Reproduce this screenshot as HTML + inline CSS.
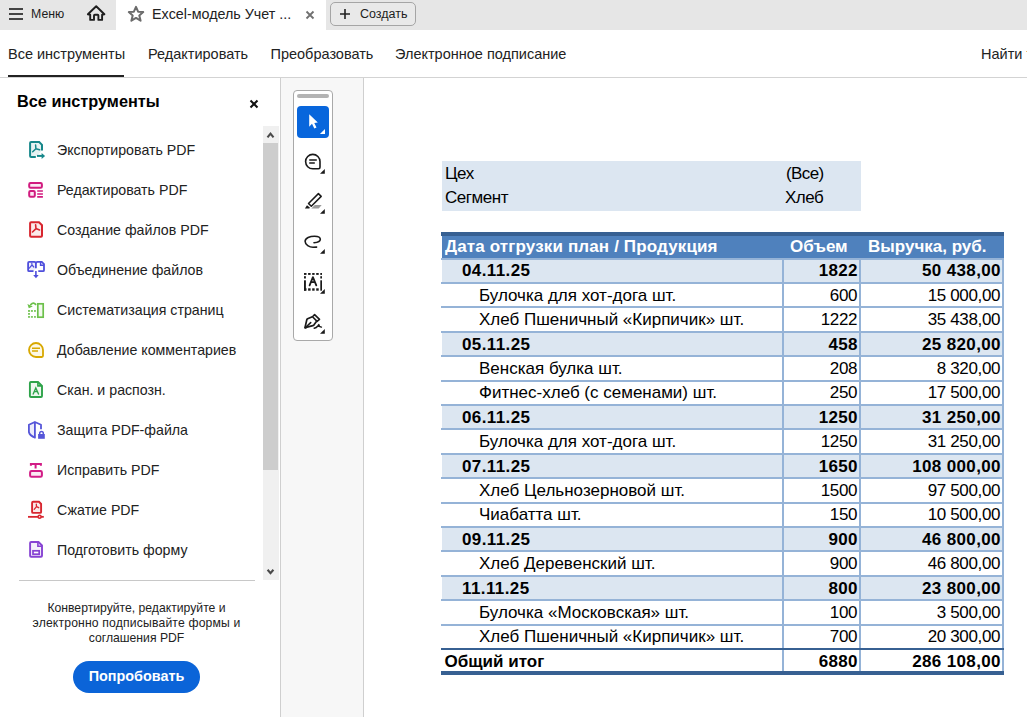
<!DOCTYPE html>
<html><head><meta charset="utf-8">
<style>
*{margin:0;padding:0;box-sizing:border-box}
html,body{width:1027px;height:717px;overflow:hidden;background:#fff;font-family:"Liberation Sans",sans-serif;color:#222}
.a{position:absolute;white-space:nowrap}
#top{position:absolute;left:0;top:0;width:1027px;height:30px;background:#e6e6e6}
#tab{position:absolute;left:116px;top:0;width:210px;height:30px;background:#fff}
.nav{font-size:14.5px;line-height:14.5px;color:#222}
.it{font-size:14.2px;line-height:14px;color:#222}
.t{font-size:17px;line-height:17px;color:#000}
.b{font-weight:bold}
.r{text-align:right}
</style></head><body>
<!-- top bar -->
<div id="top"></div>
<div id="tab"></div>
<!-- hamburger -->
<div class="a" style="left:9px;top:8px;width:14px;height:2px;background:#444"></div>
<div class="a" style="left:9px;top:13px;width:14px;height:2px;background:#444"></div>
<div class="a" style="left:9px;top:18px;width:14px;height:2px;background:#444"></div>
<div class="a" style="left:31px;top:8px;font-size:12.3px;line-height:12px;color:#1d1d1d">Меню</div>
<!-- home -->
<svg class="a" style="left:82px;top:0px" width="28" height="28" viewBox="0 0 28 28">
<path d="M14.2 6.2 L5.9 14.3 L8.2 14.8 L8.2 19.9 L12 19.9 L12 15.6 Q12 14.8 12.8 14.8 L15.6 14.8 Q16.4 14.8 16.4 15.6 L16.4 19.9 L20.1 19.9 L20.1 14.8 L22.4 14.3 Z" fill="none" stroke="#1e1e1e" stroke-width="1.9" stroke-linejoin="round"/>
</svg>
<!-- star -->
<svg class="a" style="left:127px;top:5px" width="18" height="18" viewBox="0 0 18 18">
<path d="M9 1.9 L11.1 6.7 L16.2 7.1 L12.3 10.4 L13.6 15.7 L9 12.9 L4.4 15.7 L5.7 10.4 L1.8 7.1 L6.9 6.7 Z" fill="none" stroke="#6b6b6b" stroke-width="2" stroke-linejoin="round"/>
</svg>
<div class="a" style="left:152px;top:7px;font-size:14.3px;line-height:14px;color:#222">Excel-модель Учет ...</div>
<!-- tab close -->
<svg class="a" style="left:305px;top:10px" width="10" height="10" viewBox="0 0 10 10">
<path d="M1.5 1.5 L8.5 8.5 M8.5 1.5 L1.5 8.5" stroke="#707070" stroke-width="1.8"/>
</svg>
<!-- create button -->
<div class="a" style="left:330px;top:2px;width:86px;height:24px;border:1px solid #a5a5a5;border-radius:5px;background:#e9e9e9"></div>
<svg class="a" style="left:339px;top:8px" width="12" height="12" viewBox="0 0 12 12">
<path d="M6 1 V11 M1 6 H11" stroke="#222" stroke-width="1.6"/>
</svg>
<div class="a" style="left:360px;top:8px;font-size:12.5px;line-height:12px;color:#1d1d1d">Создать</div>

<!-- nav row -->
<div class="a nav" style="left:8px;top:47px">Все инструменты</div>
<div class="a nav" style="left:148px;top:47px">Редактировать</div>
<div class="a nav" style="left:270.5px;top:47px">Преобразовать</div>
<div class="a nav" style="left:395px;top:47px">Электронное подписание</div>
<div class="a nav" style="left:981px;top:47px">Найти т</div>
<div class="a" style="left:8px;top:75px;width:116px;height:2px;background:#222"></div>
<div class="a" style="left:0;top:77px;width:1027px;height:1px;background:#d3d3d3"></div>

<!-- left panel -->
<div class="a" style="left:17px;top:93px;font-size:16.3px;line-height:16px;font-weight:bold;color:#000">Все инструменты</div>
<svg class="a" style="left:248px;top:98px" width="12" height="12" viewBox="0 0 12 12">
<path d="M2.5 2.5 L9.5 9.5 M9.5 2.5 L2.5 9.5" stroke="#111" stroke-width="2"/>
</svg>
<div class="a" style="left:280px;top:78px;width:1px;height:639px;background:#cfcfcf"></div>
<div class="a" style="left:281px;top:78px;width:82px;height:639px;background:#f7f7f7"></div>
<div class="a" style="left:363px;top:78px;width:1px;height:639px;background:#cfcfcf"></div>
<!-- scrollbar -->
<div class="a" style="left:263px;top:126px;width:16px;height:454px;background:#f0f0f0"></div>
<div class="a" style="left:263px;top:143px;width:15px;height:327px;background:#cdcdcd"></div>
<svg class="a" style="left:265px;top:130px" width="12" height="10" viewBox="0 0 12 10"><path d="M2.5 7.3 L5.5 3.6 L8.5 7.3" fill="none" stroke="#4a4a4a" stroke-width="2.1"/></svg>
<svg class="a" style="left:265px;top:566px" width="12" height="10" viewBox="0 0 12 10"><path d="M2.6 3.8 L5.5 7.2 L8.4 3.8" fill="none" stroke="#4a4a4a" stroke-width="2.1"/></svg>

<!-- items -->
<div class="a it" style="left:57px;top:143px">Экспортировать PDF</div>
<div class="a it" style="left:57px;top:183px">Редактировать PDF</div>
<div class="a it" style="left:57px;top:223px">Создание файлов PDF</div>
<div class="a it" style="left:57px;top:263px">Объединение файлов</div>
<div class="a it" style="left:57px;top:303px">Систематизация страниц</div>
<div class="a it" style="left:57px;top:343px">Добавление комментариев</div>
<div class="a it" style="left:57px;top:383px">Скан. и распозн.</div>
<div class="a it" style="left:57px;top:423px">Защита PDF-файла</div>
<div class="a it" style="left:57px;top:463px">Исправить PDF</div>
<div class="a it" style="left:57px;top:503px">Сжатие PDF</div>
<div class="a it" style="left:57px;top:543px">Подготовить форму</div>

<div class="a" style="left:19px;top:580px;width:236px;height:1px;background:#c8c8c8"></div>
<div class="a" style="left:0;top:601px;width:273px;text-align:center;font-size:12.2px;line-height:15px;color:#222;white-space:normal">Конвертируйте, редактируйте и<br><span style="letter-spacing:0.16px">электронно подписывайте формы и</span><br>соглашения PDF</div>
<div class="a" style="left:73px;top:661px;width:127px;height:32px;border-radius:16px;background:#0b64d8"></div>
<div class="a" style="left:73px;top:669px;width:127px;text-align:center;font-size:14.4px;line-height:14px;font-weight:bold;color:#fff">Попробовать</div>

<!-- ICONS_PANEL -->
<!-- export -->
<svg class="a" style="left:24px;top:136px" width="26" height="26" viewBox="0 0 26 26">
<path d="M11.8 20.9 L7.1 20.9 Q6.1 20.9 6.1 19.9 L6.1 7.1 Q6.1 6.1 7.1 6.1 L15.2 6.1 L18 8.9 L18 14.5" fill="#e6f2f2" stroke="#16878a" stroke-width="2"/>
<path d="M11.6 9 L11.9 12.7 L8.7 15.8 M11.9 12.7 L15.6 13.8" fill="none" stroke="#16878a" stroke-width="1.5" stroke-linecap="round"/>
<path d="M13 19.9 L18.5 19.9" stroke="#16878a" stroke-width="2"/>
<path d="M17.6 16.9 L21.1 19.9 L17.6 22.9 Z" fill="#16878a"/>
</svg>
<!-- edit -->
<svg class="a" style="left:24px;top:177px" width="26" height="26" viewBox="0 0 26 26">
<rect x="5.2" y="6.1" width="12.7" height="4.7" rx="1.3" fill="#fbe9f3" stroke="#d11b7f" stroke-width="2"/>
<rect x="5.2" y="14" width="5.6" height="5.8" rx="1.3" fill="#fbe9f3" stroke="#d11b7f" stroke-width="2"/>
<path d="M13.2 14 H18.9 M13.2 16.95 H18.9 M13.2 19.85 H18.9" stroke="#d11b7f" stroke-width="1.6"/>
</svg>
<!-- create -->
<svg class="a" style="left:24px;top:217px" width="26" height="26" viewBox="0 0 26 26">
<path d="M7.1 5.2 L15 5.2 L18 8.2 L18 18.8 Q18 19.8 17 19.8 L7.1 19.8 Q6.1 19.8 6.1 18.8 L6.1 6.2 Q6.1 5.2 7.1 5.2 Z" fill="#fbeaea" stroke="#d8262f" stroke-width="2"/>
<path d="M11.6 7.9 L12 11.6 L8.5 15 M12 11.6 L15.5 13" fill="none" stroke="#d8262f" stroke-width="1.6" stroke-linecap="round"/>
</svg>
<!-- combine -->
<svg class="a" style="left:24px;top:256px" width="26" height="26" viewBox="0 0 26 26">
<path d="M9.5 15.2 L5.1 15.2 Q4.1 15.2 4.1 14.2 L4.1 6.9 Q4.1 5.9 5.1 5.9 L10.3 5.9 Q11.9 5.9 11.9 7.5 L11.9 12.3" fill="#eeeefb" stroke="#4f4fdc" stroke-width="1.8"/>
<path d="M11.9 7.5 Q11.9 5.9 13.6 5.9 L17.8 5.9 L20 8.1 L20 14.2 Q20 15.2 19 15.2 L14.3 15.2" fill="none" stroke="#4f4fdc" stroke-width="1.8"/>
<path d="M16.6 5.9 L16.6 9.2 L20 9.2" fill="none" stroke="#4f4fdc" stroke-width="1.5"/>
<path d="M7.8 7.2 L8 9 L5.3 12.2 M8 9 L9.8 11" fill="none" stroke="#4f4fdc" stroke-width="1.2" stroke-linecap="round"/>
<path d="M11.9 15 L11.9 19.5" stroke="#4f4fdc" stroke-width="1.6"/>
<path d="M9.2 19 L14.7 19 L11.95 22.2 Z" fill="#4f4fdc"/>
</svg>
<!-- organize -->
<svg class="a" style="left:24px;top:297px" width="26" height="26" viewBox="0 0 26 26">
<rect x="13.8" y="6.8" width="5.4" height="13.4" fill="#f2f9ee" stroke="#6cc04a" stroke-width="1.7"/>
<g fill="#6cc04a" opacity="0.85">
<rect x="4" y="13" width="2" height="1.9"/><rect x="6.9" y="13" width="2" height="1.9"/><rect x="10" y="13" width="1.9" height="1.9"/>
<rect x="4" y="16" width="2" height="1.8"/>
<rect x="4" y="19" width="2" height="1.8"/><rect x="6.9" y="19" width="2" height="1.8"/><rect x="10" y="19" width="1.9" height="1.8"/>
</g>
<path d="M11.6 7.4 Q9.5 4.8 6.8 7.6" fill="none" stroke="#6cc04a" stroke-width="1.8" stroke-linecap="round"/>
<path d="M3.4 7 L8.8 9.4 L4.8 11.2 Z" fill="#6cc04a"/>
</svg>
<!-- comment -->
<svg class="a" style="left:24px;top:337px" width="26" height="26" viewBox="0 0 26 26">
<path d="M12 20 A7 7 0 1 1 19 13 L19 18.8 Q19 20 17.8 20 Z" fill="#fdf8e4" stroke="#d8a800" stroke-width="1.8"/>
<path d="M8 11.2 H16 M8 14.1 H14" stroke="#d8a800" stroke-width="1.5"/>
</svg>
<!-- scan -->
<svg class="a" style="left:24px;top:377px" width="26" height="26" viewBox="0 0 26 26">
<path d="M6.9 5 L14 5 L18 9 L18 19 Q18 20 17 20 L6.9 20 Q5.9 20 5.9 19 L5.9 6 Q5.9 5 6.9 5 Z" fill="#edf7ef" stroke="#2ea34a" stroke-width="1.9"/>
<path d="M13.9 5.2 L13.9 8.9 L17.8 8.9" fill="none" stroke="#2ea34a" stroke-width="1.6"/>
<path d="M9.2 17 L11.8 10.9 L14.5 17 M10.2 14.6 H13.5" fill="none" stroke="#2ea34a" stroke-width="1.4" stroke-linecap="round"/>
</svg>
<!-- protect -->
<svg class="a" style="left:24px;top:417px" width="26" height="26" viewBox="0 0 26 26">
<path d="M10.9 5 L4.9 7.8 L4.9 15 Q5.5 18.5 10.9 21 Z" fill="#ededfb"/>
<path d="M17 12.3 L17 7.8 L10.9 5 L4.9 7.8 L4.9 15 Q5.5 18.5 11.6 21 M10.9 5 L10.9 21" fill="none" stroke="#5656d9" stroke-width="1.8" stroke-linejoin="round"/>
<path d="M15.7 17.3 L15.7 16.3 A1.8 1.8 0 0 1 19.3 16.3 L19.3 17.3" fill="none" stroke="#5656d9" stroke-width="1.5"/>
<rect x="14.1" y="17" width="6.7" height="4.8" fill="#5656d9"/>
</svg>
<!-- redact -->
<svg class="a" style="left:24px;top:457px" width="26" height="26" viewBox="0 0 26 26">
<path d="M6.9 8.7 L6.9 7.1 L16.9 7.1 L16.9 8.7 M11.6 7.1 L11.6 11.6" fill="none" stroke="#d21c86" stroke-width="2"/>
<rect x="6.1" y="14" width="11.8" height="5.8" rx="1.4" fill="#fbe9f3" stroke="#d21c86" stroke-width="2"/>
</svg>
<!-- compress -->
<svg class="a" style="left:24px;top:497px" width="26" height="26" viewBox="0 0 26 26">
<path d="M9.1 4.8 L15 4.8 L17.1 7 L17.1 14.9 Q17.1 15.9 16.1 15.9 L9.1 15.9 Q8.1 15.9 8.1 14.9 L8.1 5.8 Q8.1 4.8 9.1 4.8 Z" fill="#fbeaea" stroke="#d8262f" stroke-width="1.9"/>
<path d="M12.3 7.1 L12.5 9.6 L10.2 12.3 M12.5 9.6 L14.7 10.7" fill="none" stroke="#d8262f" stroke-width="1.3" stroke-linecap="round"/>
<path d="M4 19.85 H19.8" stroke="#d8262f" stroke-width="1.8"/>
<circle cx="15.6" cy="19.85" r="1.5" fill="#fbeaea" stroke="#d8262f" stroke-width="1.5"/>
</svg>
<!-- form -->
<svg class="a" style="left:24px;top:537px" width="26" height="26" viewBox="0 0 26 26">
<path d="M7.1 5 L14.5 5 L18 8.5 L18 18.8 Q18 19.8 17 19.8 L7.1 19.8 Q6.1 19.8 6.1 18.8 L6.1 6 Q6.1 5 7.1 5 Z" fill="#f4effb" stroke="#8743d3" stroke-width="1.9"/>
<path d="M13.9 5.2 L13.9 9.3 L17.8 9.3" fill="none" stroke="#8743d3" stroke-width="1.6"/>
<rect x="9" y="13.8" width="6.2" height="3.4" fill="#fff" stroke="#8743d3" stroke-width="1.7"/>
</svg>
<!-- /ICONS_PANEL -->
<!-- TOOLBAR -->
<div class="a" style="left:293px;top:90px;width:40px;height:251px;border:1px solid #a9a9a9;border-radius:4px;background:#fff"></div>
<div class="a" style="left:297px;top:94px;width:32px;height:4px;border-radius:2px;background:#b3b3b3"></div>
<div class="a" style="left:297px;top:106px;width:32px;height:32px;border-radius:4px;background:#0866dc"></div>
<svg class="a" style="left:300px;top:108px" width="28" height="28" viewBox="0 0 28 28">
<path d="M9.2 6.3 L17.8 14.5 L14.3 15 L16.5 19.6 L14.3 20.6 L12 15.8 L9.2 18.7 Z" fill="#fff"/>
<path d="M19.9 26 L25 26 L25 20.9 Z" fill="#fff"/>
</svg>
<svg class="a" style="left:300px;top:150px" width="28" height="28" viewBox="0 0 28 28">
<path d="M12.8 18.8 A7.2 7.2 0 1 1 20 11.6 L20 17.3 Q20 18.8 18.5 18.8 Z" fill="none" stroke="#1a1a1a" stroke-width="1.6"/>
<path d="M9.2 9.95 H16.8 M9.2 13.1 H14.8" stroke="#1a1a1a" stroke-width="1.5"/>
<path d="M20 23.8 L24.8 23.8 L24.8 19 Z" fill="#1a1a1a"/>
</svg>
<svg class="a" style="left:300px;top:188px" width="28" height="28" viewBox="0 0 28 28">
<path d="M18.4 5.6 L21.2 8.4 L11.3 18.3 L8.5 15.5 Z" fill="none" stroke="#1a1a1a" stroke-width="1.5" stroke-linejoin="round"/>
<path d="M4.9 20.6 L7 17.2 L9.8 19.6 L9.4 20.6 Z" fill="#1a1a1a"/>
<path d="M11.3 20.5 L18.7 20.5 L21.7 17 L14.8 17 Z" fill="#9a9a9a"/>
<path d="M20 25.8 L24.8 25.8 L24.8 21 Z" fill="#1a1a1a"/>
</svg>
<svg class="a" style="left:300px;top:228px" width="28" height="28" viewBox="0 0 28 28">
<path d="M14 14.8 C17 14.6 20.3 13.8 20.3 11.3 C20.3 8.8 17 8.2 14.5 8.2 C10 8.2 5.1 10 5.1 13.3 C5.1 16.8 9.5 19.3 13 19.3 L16.6 19.1" fill="none" stroke="#1a1a1a" stroke-width="1.6" stroke-linecap="round"/>
<path d="M20 25.8 L24.8 25.8 L24.8 21 Z" fill="#1a1a1a"/>
</svg>
<svg class="a" style="left:300px;top:268px" width="28" height="28" viewBox="0 0 28 28">
<g fill="#1a1a1a">
<rect x="4" y="5" width="2.5" height="1.9"/><rect x="8.1" y="5" width="2.5" height="1.9"/><rect x="12.2" y="5" width="2.4" height="1.9"/><rect x="16.2" y="5" width="2.5" height="1.9"/><rect x="20.3" y="5" width="1.7" height="1.9"/>
<rect x="4" y="8.2" width="1.9" height="2.3"/><rect x="20.3" y="8.2" width="1.7" height="2.3"/>
<rect x="4" y="12.3" width="1.9" height="10.4"/><rect x="20.3" y="12.3" width="1.7" height="10.4"/>
<rect x="4" y="20.3" width="2.5" height="2.4"/><rect x="8.1" y="20.3" width="2.5" height="2.4"/><rect x="12.2" y="20.3" width="2.4" height="2.4"/><rect x="16.2" y="20.3" width="2.5" height="2.4"/>
</g>
<path d="M9.6 17.3 L12.9 9.2 L16.3 17.3 M10.9 14.2 H15" fill="none" stroke="#1a1a1a" stroke-width="1.8" stroke-linecap="round" stroke-linejoin="round"/>
<path d="M20 25.8 L24.8 25.8 L24.8 21 Z" fill="#1a1a1a"/>
</svg>
<svg class="a" style="left:300px;top:308px" width="28" height="28" viewBox="0 0 28 28">
<path d="M14.6 6.6 L19.5 11.4 L17.1 13.4 L12.5 8.7 Z" fill="none" stroke="#1a1a1a" stroke-width="1.6" stroke-linejoin="round"/>
<path d="M12.4 8.7 L7.6 10.8 Q7 11.1 6.8 11.8 L5 19.6 L12.9 17.6 Q13.8 17.4 14.2 16.6 L16.6 13.2" fill="none" stroke="#1a1a1a" stroke-width="1.7" stroke-linejoin="round"/>
<path d="M6 19 L10.7 14.6" stroke="#1a1a1a" stroke-width="1.6" stroke-linecap="round"/>
<circle cx="5.6" cy="19.6" r="1.2" fill="#1a1a1a"/>
<path d="M14.2 20.2 Q16.4 19.8 17.8 18 L18.8 16.6 L19.2 18.4 L21.4 19.1" fill="none" stroke="#1a1a1a" stroke-width="1.5" stroke-linecap="round" stroke-linejoin="round"/>
<circle cx="18.9" cy="17.9" r="1" fill="#1a1a1a"/>
<path d="M20 25.8 L24.8 25.8 L24.8 21 Z" fill="#1a1a1a"/>
</svg>
<!-- /TOOLBAR -->
<!-- TABLE -->
<!-- filter -->
<div class="a" style="left:442px;top:161px;width:419px;height:50px;background:#dce6f1"></div>
<div class="a t" style="left:445px;top:165px;letter-spacing:-0.5px">Цех</div>
<div class="a t" style="left:786px;top:165px;letter-spacing:-0.6px">(Все)</div>
<div class="a t" style="left:445px;top:189px;letter-spacing:-0.45px">Сегмент</div>
<div class="a t" style="left:785px;top:189px;letter-spacing:-0.5px">Хлеб</div>
<!-- header -->
<div class="a" style="left:441px;top:232px;width:563px;height:4px;background:#376092"></div>
<div class="a" style="left:442px;top:236px;width:562px;height:22px;background:#4f81bd"></div>
<div class="a t b" style="left:445px;top:238px;color:#fff;letter-spacing:0.14px">Дата отгрузки план / Продукция</div>
<div class="a t b" style="left:790px;top:238px;color:#fff">Объем</div>
<div class="a t b" style="left:868px;top:238px;color:#fff">Выручка, руб.</div>
<div class="a" style="left:441px;top:258.0px;width:563px;height:2px;background:#95b3d7"></div>
<div class="a" style="left:442px;top:260.0px;width:560px;height:22.0px;background:#dce6f1"></div>
<div class="a t b" style="left:462px;top:262.0px;letter-spacing:0.4px">04.11.25</div>
<div class="a t b r" style="left:780px;width:77.85px;top:262.0px;letter-spacing:0.35px">1822</div>
<div class="a t b r" style="left:860px;width:140.85px;top:262.0px;letter-spacing:0.35px">50 438,00</div>
<div class="a" style="left:441px;top:282.0px;width:563px;height:2px;background:#95b3d7"></div>
<div class="a t" style="left:479px;top:287.0px">Булочка для хот-дога шт.</div>
<div class="a t r" style="left:780px;width:77.15px;top:287.0px;letter-spacing:-0.35px">600</div>
<div class="a t r" style="left:860px;width:140.15px;top:287.0px;letter-spacing:-0.35px">15 000,00</div>
<div class="a" style="left:441px;top:306.0px;width:563px;height:2px;background:#95b3d7"></div>
<div class="a t" style="left:479px;top:311.0px">Хлеб Пшеничный «Кирпичик» шт.</div>
<div class="a t r" style="left:780px;width:77.15px;top:311.0px;letter-spacing:-0.35px">1222</div>
<div class="a t r" style="left:860px;width:140.15px;top:311.0px;letter-spacing:-0.35px">35 438,00</div>
<div class="a" style="left:441px;top:331.0px;width:563px;height:2px;background:#95b3d7"></div>
<div class="a" style="left:442px;top:333.0px;width:560px;height:22.0px;background:#dce6f1"></div>
<div class="a t b" style="left:462px;top:336.0px;letter-spacing:0.4px">05.11.25</div>
<div class="a t b r" style="left:780px;width:77.85px;top:336.0px;letter-spacing:0.35px">458</div>
<div class="a t b r" style="left:860px;width:140.85px;top:336.0px;letter-spacing:0.35px">25 820,00</div>
<div class="a" style="left:441px;top:355.0px;width:563px;height:2px;background:#95b3d7"></div>
<div class="a t" style="left:479px;top:360.0px">Венская булка шт.</div>
<div class="a t r" style="left:780px;width:77.15px;top:360.0px;letter-spacing:-0.35px">208</div>
<div class="a t r" style="left:860px;width:140.15px;top:360.0px;letter-spacing:-0.35px">8 320,00</div>
<div class="a" style="left:441px;top:380.0px;width:563px;height:2px;background:#95b3d7"></div>
<div class="a t" style="left:479px;top:384.0px">Фитнес-хлеб (с семенами) шт.</div>
<div class="a t r" style="left:780px;width:77.15px;top:384.0px;letter-spacing:-0.35px">250</div>
<div class="a t r" style="left:860px;width:140.15px;top:384.0px;letter-spacing:-0.35px">17 500,00</div>
<div class="a" style="left:441px;top:404.0px;width:563px;height:2px;background:#95b3d7"></div>
<div class="a" style="left:442px;top:406.0px;width:560px;height:22.0px;background:#dce6f1"></div>
<div class="a t b" style="left:462px;top:409.0px;letter-spacing:0.4px">06.11.25</div>
<div class="a t b r" style="left:780px;width:77.85px;top:409.0px;letter-spacing:0.35px">1250</div>
<div class="a t b r" style="left:860px;width:140.85px;top:409.0px;letter-spacing:0.35px">31 250,00</div>
<div class="a" style="left:441px;top:428.0px;width:563px;height:2px;background:#95b3d7"></div>
<div class="a t" style="left:479px;top:433.0px">Булочка для хот-дога шт.</div>
<div class="a t r" style="left:780px;width:77.15px;top:433.0px;letter-spacing:-0.35px">1250</div>
<div class="a t r" style="left:860px;width:140.15px;top:433.0px;letter-spacing:-0.35px">31 250,00</div>
<div class="a" style="left:441px;top:453.0px;width:563px;height:2px;background:#95b3d7"></div>
<div class="a" style="left:442px;top:455.0px;width:560px;height:22.0px;background:#dce6f1"></div>
<div class="a t b" style="left:462px;top:458.0px;letter-spacing:0.4px">07.11.25</div>
<div class="a t b r" style="left:780px;width:77.85px;top:458.0px;letter-spacing:0.35px">1650</div>
<div class="a t b r" style="left:860px;width:140.85px;top:458.0px;letter-spacing:0.35px">108 000,00</div>
<div class="a" style="left:441px;top:477.0px;width:563px;height:2px;background:#95b3d7"></div>
<div class="a t" style="left:479px;top:482.0px">Хлеб Цельнозерновой шт.</div>
<div class="a t r" style="left:780px;width:77.15px;top:482.0px;letter-spacing:-0.35px">1500</div>
<div class="a t r" style="left:860px;width:140.15px;top:482.0px;letter-spacing:-0.35px">97 500,00</div>
<div class="a" style="left:441px;top:502.0px;width:563px;height:2px;background:#95b3d7"></div>
<div class="a t" style="left:479px;top:506.0px">Чиабатта шт.</div>
<div class="a t r" style="left:780px;width:77.15px;top:506.0px;letter-spacing:-0.35px">150</div>
<div class="a t r" style="left:860px;width:140.15px;top:506.0px;letter-spacing:-0.35px">10 500,00</div>
<div class="a" style="left:441px;top:526.0px;width:563px;height:2px;background:#95b3d7"></div>
<div class="a" style="left:442px;top:528.0px;width:560px;height:22.0px;background:#dce6f1"></div>
<div class="a t b" style="left:462px;top:531.0px;letter-spacing:0.4px">09.11.25</div>
<div class="a t b r" style="left:780px;width:77.85px;top:531.0px;letter-spacing:0.35px">900</div>
<div class="a t b r" style="left:860px;width:140.85px;top:531.0px;letter-spacing:0.35px">46 800,00</div>
<div class="a" style="left:441px;top:550.0px;width:563px;height:2px;background:#95b3d7"></div>
<div class="a t" style="left:479px;top:555.0px">Хлеб Деревенский шт.</div>
<div class="a t r" style="left:780px;width:77.15px;top:555.0px;letter-spacing:-0.35px">900</div>
<div class="a t r" style="left:860px;width:140.15px;top:555.0px;letter-spacing:-0.35px">46 800,00</div>
<div class="a" style="left:441px;top:575.0px;width:563px;height:2px;background:#95b3d7"></div>
<div class="a" style="left:442px;top:577.0px;width:560px;height:22.0px;background:#dce6f1"></div>
<div class="a t b" style="left:462px;top:580.0px;letter-spacing:0.4px">11.11.25</div>
<div class="a t b r" style="left:780px;width:77.85px;top:580.0px;letter-spacing:0.35px">800</div>
<div class="a t b r" style="left:860px;width:140.85px;top:580.0px;letter-spacing:0.35px">23 800,00</div>
<div class="a" style="left:441px;top:599.0px;width:563px;height:2px;background:#95b3d7"></div>
<div class="a t" style="left:479px;top:604.0px">Булочка «Московская» шт.</div>
<div class="a t r" style="left:780px;width:77.15px;top:604.0px;letter-spacing:-0.35px">100</div>
<div class="a t r" style="left:860px;width:140.15px;top:604.0px;letter-spacing:-0.35px">3 500,00</div>
<div class="a" style="left:441px;top:624.0px;width:563px;height:2px;background:#95b3d7"></div>
<div class="a t" style="left:479px;top:628.0px">Хлеб Пшеничный «Кирпичик» шт.</div>
<div class="a t r" style="left:780px;width:77.15px;top:628.0px;letter-spacing:-0.35px">700</div>
<div class="a t r" style="left:860px;width:140.15px;top:628.0px;letter-spacing:-0.35px">20 300,00</div>
<div class="a" style="left:441px;top:648.0px;width:563px;height:2px;background:#376092"></div>
<div class="a t b" style="left:444.5px;top:653.0px">Общий итог</div>
<div class="a t b r" style="left:780px;width:77.85px;top:653.0px;letter-spacing:0.35px">6880</div>
<div class="a t b r" style="left:860px;width:140.85px;top:653.0px;letter-spacing:0.35px">286 108,00</div>
<div class="a" style="left:782px;top:258px;width:2px;height:413px;background:#95b3d7"></div>
<div class="a" style="left:859px;top:258px;width:2px;height:413px;background:#95b3d7"></div>
<div class="a" style="left:1002px;top:258px;width:2px;height:413px;background:#95b3d7"></div>
<div class="a" style="left:441px;top:648px;width:563px;height:2px;background:#376092"></div>
<div class="a" style="left:441px;top:671px;width:563px;height:4px;background:#376092"></div>
<!-- /TABLE -->
</body></html>
